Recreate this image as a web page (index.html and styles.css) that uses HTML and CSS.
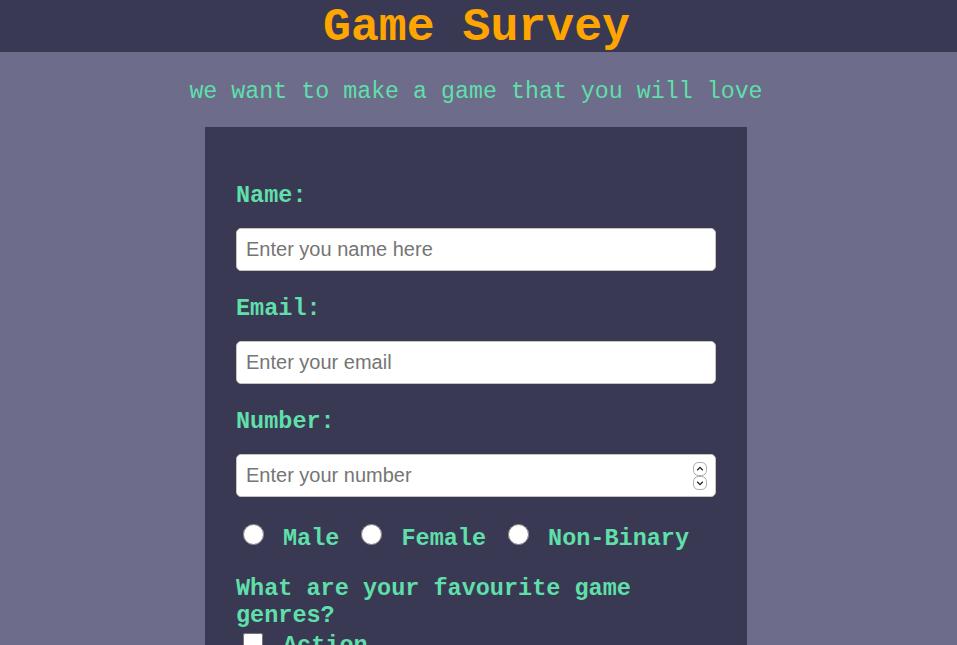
FILE: index.html
```html
<!DOCTYPE html>
<html lang="en">
<head>
<meta charset="utf-8">
<title>Game Survey</title>
<link rel="stylesheet" href="styles.css">
</head>
<body>
<header class="top-bar">
  <h1 class="title">Game Survey</h1>
</header>
<main class="content">
  <p class="subtitle">we want to make a game that you will love</p>
  <form class="survey">
    <label class="field-label" for="name">Name:</label>
    <input class="text-input" id="name" type="text" placeholder="Enter you name here">
    <label class="field-label" for="email">Email:</label>
    <input class="text-input" id="email" type="email" placeholder="Enter your email">
    <label class="field-label" for="number">Number:</label>
    <div class="number-wrap">
      <input class="text-input number-input" id="number" type="number" placeholder="Enter your number">
      <svg class="spinner" width="14" height="28" viewBox="0 0 14 28" aria-hidden="true">
        <rect x="0.5" y="0.5" width="13" height="13" rx="5" fill="#fff" stroke="#a9a9a9"/>
        <rect x="0.5" y="14.5" width="13" height="13" rx="5" fill="#fff" stroke="#a9a9a9"/>
        <path d="M4.2 8.2 L7 5.4 L9.8 8.2" fill="none" stroke="#222" stroke-width="1.3"/>
        <path d="M4.2 19.8 L7 22.6 L9.8 19.8" fill="none" stroke="#222" stroke-width="1.3"/>
      </svg>
    </div>
    <div class="radio-row">
      <label class="option"><input class="radio" type="radio" name="gender"><span class="option-text">Male</span></label>
      <label class="option"><input class="radio" type="radio" name="gender"><span class="option-text">Female</span></label>
      <label class="option"><input class="radio" type="radio" name="gender"><span class="option-text">Non-Binary</span></label>
    </div>
    <p class="question">What are your favourite game genres?</p>
    <label class="option check-option"><input class="check" type="checkbox"><span class="option-text">Action</span></label>
    <label class="option check-option"><input class="check" type="checkbox"><span class="option-text">Adventure</span></label>
  </form>
</main>
</body>
</html>
```
FILE: styles.css
```css
html, body {
  margin: 0;
  padding: 0;
}
body {
  background: #6d6d8b;
  font-family: "Liberation Mono", "Courier New", monospace;
  color: #5fdfa9;
}
.top-bar {
  background: #3a3954;
  height: 52px;
  box-sizing: border-box;
  padding: 3px 4px 0 0;
  display: flex;
  justify-content: center;
  align-items: center;
}
.title {
  margin: 0;
  font-size: 46.5px;
  line-height: 48px;
  color: #ffa500;
  font-weight: bold;
}
.content {
  padding-right: 5px;
}
.subtitle {
  margin: 0;
  padding: 27px 0 21px;
  text-align: center;
  font-size: 23.3px;
  line-height: 27px;
}
.survey {
  width: 480px;
  margin: 0 auto;
  background: #3a3954;
  padding: 53px 31px 40px;
  display: flex;
  flex-direction: column;
}
.field-label {
  font-size: 23.5px;
  line-height: 27px;
  font-weight: bold;
  padding-top: 2px;
  margin-bottom: 19px;
}
.text-input {
  box-sizing: border-box;
  height: 43px;
  width: 480px;
  margin: 0 0 22px;
  border: 1px solid #c9c4bb;
  border-radius: 5px;
  padding: 0 9px;
  font-family: "Liberation Sans", Arial, sans-serif;
  font-size: 20px;
  background: #fff;
  color: #222;
}
.text-input::placeholder {
  color: #757575;
}
.number-wrap {
  position: relative;
  height: 43px;
  margin-bottom: 22px;
}
.number-input {
  margin: 0;
  -moz-appearance: textfield;
}
.number-input::-webkit-inner-spin-button,
.number-input::-webkit-outer-spin-button {
  -webkit-appearance: none;
  margin: 0;
}
.spinner {
  position: absolute;
  right: 9px;
  top: 8px;
}
.radio-row {
  display: flex;
  align-items: flex-start;
  margin-top: 3px;
}
.option {
  display: flex;
  align-items: flex-start;
  font-size: 23.5px;
  line-height: 27px;
  font-weight: bold;
  margin-right: 15px;
}
.option-text {
  padding-top: 3px;
}
.radio {
  width: 21px;
  height: 21px;
  margin: 2px 19px 0 7px;
}
.question {
  margin: 23px 0 0;
  font-size: 23.5px;
  line-height: 27px;
  font-weight: bold;
}
.check-option {
  margin-top: 0;
}
.check {
  width: 20px;
  height: 20px;
  margin: 4px 20px 0 7px;
}
```
